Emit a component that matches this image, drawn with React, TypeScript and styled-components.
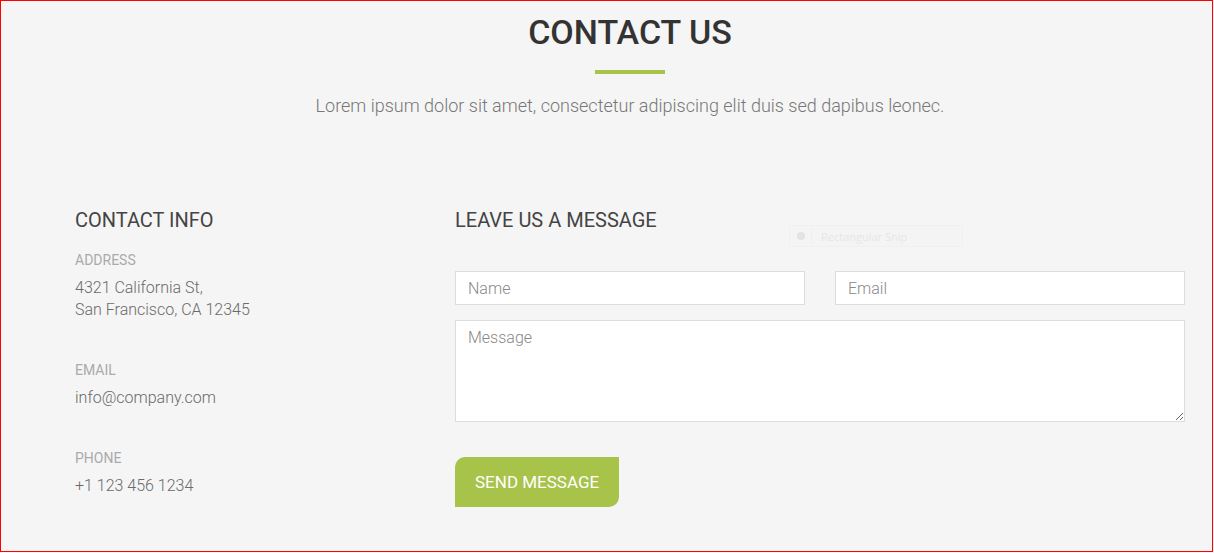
import React from 'react';
import styled, { createGlobalStyle } from 'styled-components';

const GlobalStyle = createGlobalStyle`
  html, body {
    margin: 0;
    padding: 0;
    background: #f5f5f5;
  }
  * {
    box-sizing: border-box;
  }
`;

const Frame = styled.div`
  position: relative;
  width: 1213px;
  height: 552px;
  border: 1px solid #ff0000;
  background: #f5f5f5;
  font-family: Roboto, 'Liberation Sans', sans-serif;
  overflow: hidden;
`;

const Container = styled.div`
  width: 1110px;
  margin-left: 74px;
  padding-top: 11px;
`;

const Header = styled.header`
  display: flex;
  flex-direction: column;
  align-items: center;
`;

const Title = styled.h1`
  margin: 0;
  font-size: 34px;
  line-height: 40px;
  font-weight: 500;
  color: #333;
`;

const Underline = styled.span`
  display: block;
  width: 70px;
  height: 4px;
  margin-top: 18px;
  background: #a8c34a;
`;

const Lead = styled.p`
  margin: 19px 0 0;
  font-size: 18px;
  line-height: 26px;
  font-weight: 300;
  color: #777;
`;

const Columns = styled.div`
  display: grid;
  grid-template-columns: 350px 730px;
  column-gap: 30px;
  margin-top: 89px;
`;

const Column = styled.section`
  display: flex;
  flex-direction: column;
`;

const ColumnTitle = styled.h3`
  margin: 0;
  font-size: 20px;
  line-height: 24px;
  font-weight: 400;
  color: #444;
`;

const InfoList = styled.dl`
  margin: 18px 0 0;
  display: flex;
  flex-direction: column;
`;

const InfoLabel = styled.dt<{ $first?: boolean }>`
  margin-top: ${p => (p.$first ? '0' : '39px')};
  font-size: 14px;
  line-height: 20px;
  color: #aaa;
  text-transform: uppercase;
`;

const InfoValue = styled.dd`
  margin: 7px 0 0;
  font-size: 16px;
  line-height: 22px;
  font-weight: 300;
  color: #6a6a6a;
`;

const Form = styled.form`
  margin-top: 39px;
  display: flex;
  flex-direction: column;
  gap: 15px;
`;

const FieldRow = styled.div`
  display: grid;
  grid-template-columns: 1fr 1fr;
  column-gap: 30px;
`;

const Input = styled.input`
  height: 34px;
  padding: 0 12px;
  border: 1px solid #ddd;
  border-radius: 0;
  background: #fff;
  font-family: inherit;
  font-size: 16px;
  font-weight: 300;
  color: #555;
  outline: none;
  &::placeholder {
    color: #888;
  }
`;

const TextArea = styled.textarea`
  height: 102px;
  padding: 6px 12px;
  border: 1px solid #ddd;
  border-radius: 0;
  background: #fff;
  font-family: inherit;
  font-size: 16px;
  font-weight: 300;
  line-height: 22px;
  color: #555;
  outline: none;
  &::placeholder {
    color: #888;
  }
`;

const SendButton = styled.button`
  align-self: flex-start;
  margin-top: 20px;
  height: 50px;
  padding: 0 20px;
  border: none;
  border-radius: 10px 0 10px 0;
  background: #a8c34a;
  color: #fff;
  font-family: inherit;
  font-size: 17px;
  font-weight: 400;
  text-transform: uppercase;
  cursor: pointer;
`;

/* faint leftover of a screen-snip toolbar in the capture */
const SnipGhost = styled.div`
  position: absolute;
  left: 788px;
  top: 224px;
  width: 174px;
  height: 22px;
  display: flex;
  align-items: center;
  border: 1px solid #f0f0f0;
  background: #f4f4f4;
  font-family: 'Open Sans', 'Liberation Sans', sans-serif;
  font-size: 11px;
  color: #e7e5e9;
`;

const SnipIcon = styled.span`
  width: 22px;
  height: 100%;
  display: flex;
  align-items: center;
  justify-content: center;
  border-right: 1px solid #efefef;
  &::before {
    content: '';
    width: 8px;
    height: 8px;
    border-radius: 50%;
    background: #e4e2e7;
  }
`;

const SnipText = styled.span`
  padding-left: 9px;
`;

const info = [
  { label: 'Address', lines: ['4321 California St,', 'San Francisco, CA 12345'] },
  { label: 'Email', lines: ['info@company.com'] },
  { label: 'Phone', lines: ['+1 123 456 1234'] },
];

const App: React.FC = () => {
  return (
    <>
      <GlobalStyle />
      <Frame>
        <Container>
          <Header>
            <Title>CONTACT US</Title>
            <Underline />
            <Lead>Lorem ipsum dolor sit amet, consectetur adipiscing elit duis sed dapibus leonec.</Lead>
          </Header>

          <Columns>
            <Column>
              <ColumnTitle>CONTACT INFO</ColumnTitle>
              <InfoList>
                {info.map((item, i) => (
                  <React.Fragment key={item.label}>
                    <InfoLabel $first={i === 0}>{item.label}</InfoLabel>
                    <InfoValue>
                      {item.lines.map((line, j) => (
                        <React.Fragment key={line}>
                          {j > 0 && <br />}
                          {line}
                        </React.Fragment>
                      ))}
                    </InfoValue>
                  </React.Fragment>
                ))}
              </InfoList>
            </Column>

            <Column>
              <ColumnTitle>LEAVE US A MESSAGE</ColumnTitle>
              <Form onSubmit={e => e.preventDefault()}>
                <FieldRow>
                  <Input type="text" placeholder="Name" />
                  <Input type="email" placeholder="Email" />
                </FieldRow>
                <TextArea placeholder="Message" />
                <SendButton type="submit">Send Message</SendButton>
              </Form>
            </Column>
          </Columns>
        </Container>

        <SnipGhost>
          <SnipIcon />
          <SnipText>Rectangular Snip</SnipText>
        </SnipGhost>
      </Frame>
    </>
  );
};

export default App;
